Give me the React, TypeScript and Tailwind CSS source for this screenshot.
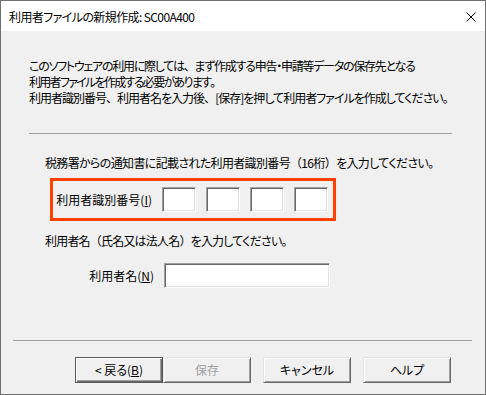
import React from "react";

const font =
  "font-['Noto_Sans_CJK_JP','Noto_Sans',sans-serif] [font-feature-settings:'palt'] text-[12px] text-black";

function F({ children }: { children: React.ReactNode }) {
  return <span className="[font-feature-settings:normal]">{children}</span>;
}

function Edit({ w }: { w: string }) {
  return (
    <div
      className={`${w} h-[25px] bg-white border border-t-[#a0a0a0] border-l-[#a0a0a0] border-b-white border-r-white shadow-[inset_1px_1px_0_#696969,inset_-1px_-1px_0_#e3e3e3]`}
    />
  );
}

function Btn({
  children,
  def,
  disabled,
  className = "",
}: {
  children: React.ReactNode;
  def?: boolean;
  disabled?: boolean;
  className?: string;
}) {
  return (
    <div
      className={`w-[88px] h-[26px] flex items-center justify-center bg-[#f0f0f0] ${
        def
          ? "border border-[#5a5a5a]"
          : "border border-t-[#e3e3e3] border-l-[#e3e3e3] border-b-[#696969] border-r-[#696969]"
      } ${className}`}
    >
      <div
        className={`w-full h-full flex items-center justify-center ${
          def
            ? "shadow-[inset_1px_1px_0_#ffffff,inset_-1px_-1px_0_#696969,inset_-2px_-2px_0_#a0a0a0]"
            : "shadow-[inset_1px_1px_0_#ffffff,inset_-1px_-1px_0_#a0a0a0]"
        } ${disabled ? "text-[#a0a0a0]" : "text-black"} leading-[16px]`}
      >
        {children}
      </div>
    </div>
  );
}

export default function App() {
  return (
    <div className={`w-[486px] h-[395px] ${font}`}>
      <div className="w-[486px] h-[395px] border border-[#6f6f6f] bg-[#f0f0f0] flex flex-col">
        <div className="h-[30px] bg-white flex items-center justify-between pl-[8px] pr-[9px] shrink-0">
          <span className="leading-[16px] mt-[1px] tracking-[-0.6px]">
            利用者ファイルの新規作成: SC00A400
          </span>
          <svg width="10" height="10" viewBox="0 0 10 10" className="mt-[1px]">
            <path d="M0.5 0.5 L9.5 9.5 M9.5 0.5 L0.5 9.5" stroke="#000" strokeWidth="1" />
          </svg>
        </div>

        <div className="flex flex-col">
          <div className="mt-[27px] ml-[28px] leading-[16px]">
            <div className="tracking-[-1.25px]">
              このソフトウェアの利用に際しては<F>、</F>まず作成する申告・申請等データの保存先となる
            </div>
            <div className="tracking-[-1.7px]">
              利用者ファイルを作成する必要があります<F>。</F>
            </div>
            <div className="tracking-[-1px]">
              利用者識別番号<F>、</F>利用者名を入力後<F>、</F>[保存]を押して利用者ファイルを作成してください<F>。</F>
            </div>
          </div>

          <div className="mt-[27px] ml-[28px] w-[423px] h-px bg-[#a0a0a0]" />

          <div className="mt-[21px] ml-[44px] leading-[16px] tracking-[-0.65px]">
            税務署からの通知書に記載された利用者識別番号<F>（</F>16桁<F>）</F>を入力してください<F>。</F>
          </div>

          <div className="mt-[7px] ml-[49px] w-[286px] border-[3px] border-[#ff4000] flex items-center py-[6px] pr-[5px]">
            <div className="w-[110px] flex justify-end pr-[10px] leading-[16px]">
              <span>
                利用者識別番号(<span className="underline">I</span>)
              </span>
            </div>
            <div className="flex gap-[10px]">
              <Edit w="w-[34px]" />
              <Edit w="w-[34px]" />
              <Edit w="w-[34px]" />
              <Edit w="w-[34px]" />
            </div>
          </div>

          <div className="mt-[12px] ml-[44px] leading-[16px] tracking-[-0.8px]">
            利用者名<F>（</F>氏名又は法人名<F>）</F>を入力してください<F>。</F>
          </div>

          <div className="mt-[14px] ml-[44px] flex items-center">
            <div className="w-[119px] flex justify-end pr-[10px] leading-[16px]">
              <span>
                利用者名(<span className="underline">N</span>)
              </span>
            </div>
            <Edit w="w-[166px]" />
          </div>

          <div className="mt-[52px] ml-[12px] w-[459px] h-px bg-[#a0a0a0]" />

          <div className="mt-[16px] ml-[74px] flex">
            <Btn def>
              &lt; 戻る(<span className="underline">B</span>)
            </Btn>
            <Btn disabled>保存</Btn>
            <Btn className="ml-[12px]">キャンセル</Btn>
            <Btn className="ml-[12px]">ヘルプ</Btn>
          </div>
        </div>
      </div>
    </div>
  );
}
